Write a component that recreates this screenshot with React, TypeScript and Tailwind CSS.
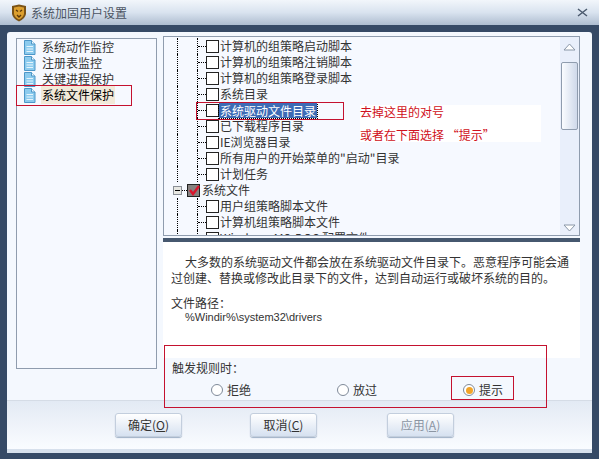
const font = { fontFamily: '"Noto Sans CJK SC", "Liberation Sans", sans-serif' };

const navItems = ["系统动作监控", "注册表监控", "关键进程保护", "系统文件保护"];

const topRows = [
  "计算机的组策略启动脚本",
  "计算机的组策略注销脚本",
  "计算机的组策略登录脚本",
  "系统目录",
  "系统驱动文件目录",
  "已下载程序目录",
  "IE浏览器目录",
  '所有用户的开始菜单的"启动"目录',
  "计划任务",
];

const bottomRows = ["用户组策略脚本文件", "计算机组策略脚本文件", "Windows MS-DOS 配置文件"];

function Logo() {
  return (
    <svg width="16" height="18" viewBox="0 0 16 18" className="ml-[11px]">
      <path d="M1 2 L8 0.5 L15 2 L15 10 Q14 15 8 17.5 Q2 15 1 10 Z" fill="#7a5216" />
      <path d="M3 3.5 L8 2.5 L13 3.5 L13 10 Q12 13.5 8 15.5 Q4 13.5 3 10 Z" fill="#dc9f2e" />
      <path d="M5 6 L7 7.5 M11 6 L9 7.5 M6 11 L8 13 L10 11" stroke="#5a3608" strokeWidth="1.4" fill="none" />
    </svg>
  );
}

function DocIcon() {
  return (
    <svg width="13" height="15" viewBox="0 0 13 15" className="shrink-0">
      <path d="M1.5 0.5 H8.5 L12 4 V14.5 H1.5 Z" fill="#8ccbee" stroke="#4d97c8" />
      <path d="M8.5 0.5 V4 H12" fill="#eef8fd" stroke="#4d97c8" />
      <path d="M3.5 6.5 H10 M3.5 9 H10 M3.5 11.5 H10" stroke="#e4f4fc" />
    </svg>
  );
}

function Guide({ className }: { className: string }) {
  return <span className={`h-full border-l border-dotted border-black ${className}`} />;
}

function Check() {
  return <span className="h-[13px] w-[13px] shrink-0 border border-[#222] bg-white" />;
}

function TreeRow({ label, selected }: { label: string; selected?: boolean }) {
  return (
    <div className="flex h-[16px] items-center pl-[13px]">
      <Guide className="w-[20px] shrink-0" />
      <Guide className="w-0 shrink-0" />
      <span className="h-0 w-[8px] shrink-0 border-t border-dotted border-black" />
      <Check />
      <span
        className={
          selected
            ? "bg-[#3d6bb5] px-[1px] leading-[15px] whitespace-nowrap text-white outline-1 outline-black outline-dotted"
            : "ml-[1px] whitespace-nowrap text-[#333]"
        }
      >
        {label}
      </span>
    </div>
  );
}

function ScrollBar() {
  return (
    <div className="flex w-[19px] shrink-0 flex-col items-center bg-[#e9effb]">
      <svg width="13" height="8" viewBox="0 0 13 8" className="mt-[6px]">
        <path d="M1 7 L6.5 1 L12 7 Z" fill="#fff" stroke="#8a97a8" />
      </svg>
      <div className="mt-[11px] h-[68px] w-[17px] rounded-[2px] border border-[#8f9cae] bg-gradient-to-r from-[#fafcff] to-[#cfd9ea]" />
      <svg width="13" height="8" viewBox="0 0 13 8" className="mt-auto mb-[3px]">
        <path d="M1 1 L6.5 7 L12 1 Z" fill="#fff" stroke="#8a97a8" />
      </svg>
    </div>
  );
}

function Radio({ label, checked }: { label: string; checked?: boolean }) {
  return (
    <div className="flex w-[126px] shrink-0 items-center gap-[4px]">
      <span className="flex h-[12px] w-[12px] items-center justify-center rounded-full border border-[#7f8a99] bg-white">
        {checked && <span className="h-[7px] w-[7px] rounded-full bg-[#f2a428]" />}
      </span>
      <span className="text-[#333]">{label}</span>
    </div>
  );
}

function Btn({ label, hot, disabled }: { label: string; hot: string; disabled?: boolean }) {
  return (
    <button
      className={`flex h-[24px] w-[67px] items-center justify-center rounded-[3px] border border-[#c3cedd] bg-gradient-to-b from-white to-[#d6e1f0] shadow-[0_1px_1px_#9fb0c6] ${
        disabled ? "text-[#8b95a3]" : "text-[#333]"
      }`}
    >
      {label}(<span className="underline">{hot}</span>)
    </button>
  );
}

export default function App() {
  return (
    <div style={font} className="relative flex h-[459px] w-[599px] flex-col overflow-hidden bg-[#364a66] text-[12px]">
      {/* title bar */}
      <div className="flex h-[25px] shrink-0 items-center bg-gradient-to-b from-[#f2f6fb] via-[#d9e3ef] to-[#aebdd0] text-[#4a5361]">
        <Logo />
        <span className="ml-[4px] text-[12px]">系统加固用户设置</span>
        <svg width="11" height="9" viewBox="0 0 11 9" className="mr-[11px] ml-auto">
          <path d="M1 1 L10 8 M10 1 L1 8" stroke="#4b5a6e" strokeWidth="1.5" />
        </svg>
      </div>

      <div className="mx-[7px] mt-[7px] flex h-[421px] flex-col rounded-t-[3px] bg-[#f4f8fe]">
        <div className="flex h-[368px] shrink-0 pt-[4px] pl-[9px]">
          {/* left list */}
          <div className="mt-[2px] h-[331px] w-[141px] shrink-0 border border-[#8f9cae] bg-[#f6f9ff] pl-[6px]">
            {navItems.map((item, i) => (
              <div key={item} className="flex h-[16px] items-center gap-[6px]">
                <DocIcon />
                <span className={i === 3 ? "ml-[-1px] bg-[#f2ead9] px-[1px] text-black" : "text-[#333]"}>{item}</span>
              </div>
            ))}
          </div>

          {/* right column */}
          <div className="ml-[6px] flex w-[417px] flex-col">
            <div className="flex h-[200px] shrink-0 border border-[#8f9cae] bg-[#f6f9ff]">
              <div className="min-w-0 flex-1 overflow-hidden pt-[1px]">
                {topRows.map((r) => (
                  <TreeRow key={r} label={r} selected={r === "系统驱动文件目录"} />
                ))}
                <div className="flex h-[16px] items-center pl-[9px]">
                  <span className="flex h-[9px] w-[9px] shrink-0 items-center justify-center border border-[#8a8f96] bg-[#e7e7e2]">
                    <span className="h-[1px] w-[5px] bg-black" />
                  </span>
                  <span className="h-0 w-[5px] shrink-0 border-t border-dotted border-black" />
                  <span className="relative h-[13px] w-[13px] shrink-0 border border-[#222] bg-[#85817f]">
                    <svg width="13" height="11" viewBox="0 0 13 11" className="absolute top-0 left-0">
                      <path d="M2 5 L5 9 L11 1" stroke="#d9142c" strokeWidth="2.4" fill="none" />
                    </svg>
                  </span>
                  <span className="ml-[2px] text-[#333]">系统文件</span>
                </div>
                {bottomRows.map((r) => (
                  <TreeRow key={r} label={r} />
                ))}
              </div>
              <ScrollBar />
            </div>

            <div className="mt-[2px] h-[4px] shrink-0 bg-[#46586f]" />

            <div className="h-[116px] shrink-0 bg-white px-[8px] pt-[12px] leading-[16px] text-[#333]">
              <p className="whitespace-nowrap">
                <span className="ml-[14px]">大多数的系统驱动文件都会放在系统驱动文件目录下。恶意程序可能会通</span>
                <br />
                过创建、替换或修改此目录下的文件，达到自动运行或破坏系统的目的。
              </p>
              <p className="mt-[10px] leading-[14px]">文件路径：</p>
              <p className="ml-[14px] text-[11px] leading-[14px]" style={{ fontFamily: '"Liberation Sans", sans-serif' }}>
                %Windir%\system32\drivers
              </p>
            </div>

            <div className="pt-[1px] pl-[9px] text-[#333]">
              <p className="leading-[17px]">触发规则时：</p>
              <div className="mt-[5px] flex pl-[39px]">
                <Radio label="拒绝" />
                <Radio label="放过" />
                <Radio label="提示" checked />
              </div>
            </div>
          </div>
        </div>

        {/* footer buttons */}
        <div className="flex flex-1 items-start border-t border-[#d5dce6] bg-gradient-to-b from-[#e3eaf4] to-[#fafcff] pt-[12px] pl-[108px]">
          <Btn label="确定" hot="O" />
          <span className="w-[68px]" />
          <Btn label="取消" hot="C" />
          <span className="w-[70px]" />
          <Btn label="应用" hot="A" disabled />
        </div>
        <div className="h-[4px] shrink-0 bg-[#d7e0ec]" />
      </div>

      {/* annotations drawn over the screenshot */}
      <div className="absolute top-[85px] left-[16px] h-[21px] w-[116px] border border-[#c4122f]" />
      <div className="absolute top-[102px] left-[196px] h-[18px] w-[148px] border border-[#c4122f]" />
      <div className="absolute top-[345px] left-[164px] h-[63px] w-[383px] border border-[#c4122f]" />
      <div className="absolute top-[376px] left-[451px] h-[24px] w-[63px] border border-[#c4122f]" />
      <div className="absolute top-[105px] left-[360px] h-[37px] w-[181px] bg-white text-[#d01020]">
        <p className="leading-[14px]">去掉这里的对号</p>
        <p className="mt-[9px] leading-[14px] whitespace-nowrap">或者在下面选择 “提示”</p>
      </div>
    </div>
  );
}
